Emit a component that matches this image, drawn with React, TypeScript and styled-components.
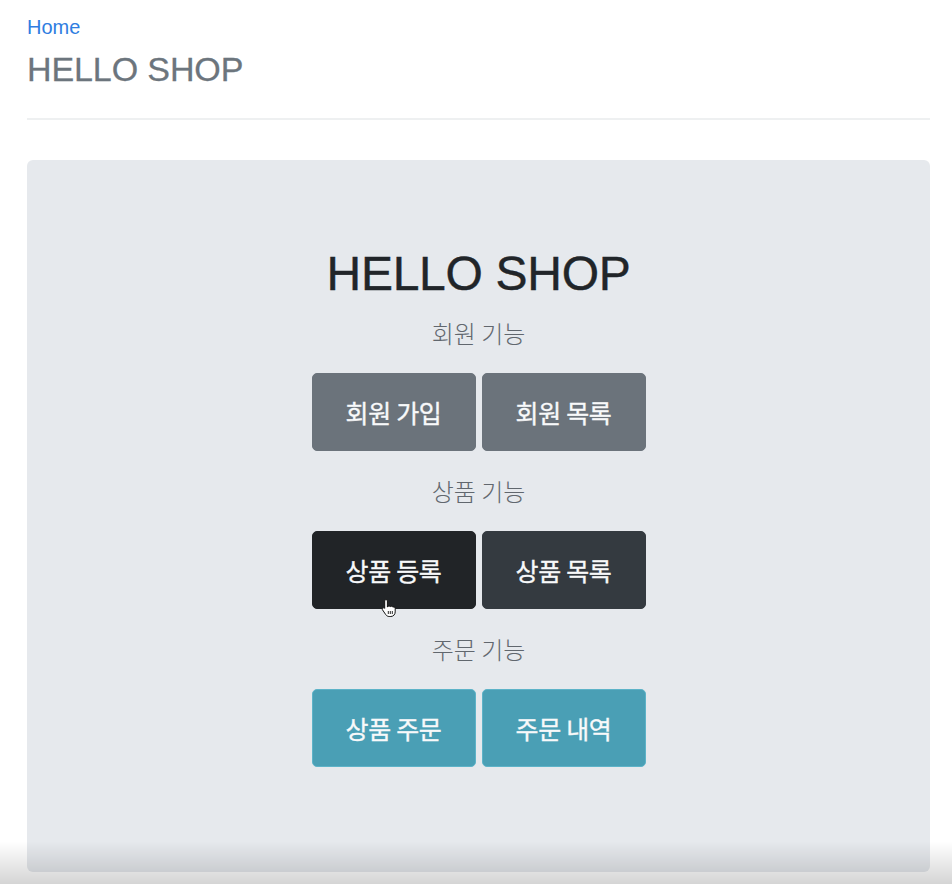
import React from "react";
import styled, { createGlobalStyle } from "styled-components";

const Global = createGlobalStyle`
  html, body { margin: 0; padding: 0; background: #ffffff; }
  body {
    font-family: "Liberation Sans", "Noto Sans CJK KR", Arial, sans-serif;
    color: #212529;
    -webkit-font-smoothing: antialiased;
  }
  * { box-sizing: border-box; }
`;

const Page = styled.div`
  padding: 0 22px 0 27px;
  min-height: 884px;
`;

const Header = styled.header`
  display: flex;
  flex-direction: column;
  padding-top: 15px;
  padding-bottom: 27px;
  border-bottom: 2px solid #eef0f1;
`;

const HomeLink = styled.a`
  font-size: 20px;
  line-height: 24px;
  color: #2f7de1;
  text-decoration: none;
  margin-bottom: 8px;
`;

const SiteTitle = styled.h3`
  margin: 0;
  font-size: 34px;
  line-height: 44px;
  font-weight: 400;
  color: #6c757d;
  letter-spacing: -0.1px;
  -webkit-text-stroke: 0.3px #6c757d;
`;

const Jumbotron = styled.section`
  margin-top: 40px;
  background: #e6e9ed;
  border-radius: 6px;
  height: 712px;
  padding-top: 85px;
  display: flex;
  flex-direction: column;
  align-items: center;
`;

const MainTitle = styled.h1`
  margin: 0 0 15px;
  font-size: 48px;
  line-height: 58px;
  font-weight: 400;
  color: #212529;
  letter-spacing: -0.3px;
  -webkit-text-stroke: 0.4px #212529;
`;

const Section = styled.div`
  display: flex;
  flex-direction: column;
  align-items: center;
  & + & { margin-top: 25px; }
`;

const Label = styled.p`
  margin: 0 0 25px;
  font-family: "Noto Sans CJK KR", sans-serif;
  font-size: 24px;
  line-height: 30px;
  font-weight: 300;
  color: #61676e;
`;

const ButtonRow = styled.div`
  display: flex;
  gap: 6px;
`;

const Button = styled.a<{ $bg: string; $border?: string }>`
  position: relative;
  width: 164px;
  height: 78px;
  display: flex;
  align-items: center;
  justify-content: center;
  background: ${(p) => p.$bg};
  border: 1px solid ${(p) => p.$border ?? p.$bg};
  border-radius: 5px;
  color: #f8f9fa;
  font-family: "Noto Sans CJK KR", sans-serif;
  font-size: 25px;
  font-weight: 400;
  -webkit-text-stroke: 0.35px #f8f9fa;
  text-decoration: none;
  letter-spacing: -0.3px;
`;

const Cursor = styled.svg`
  position: absolute;
  left: 68px;
  top: 66px;
  width: 16px;
  height: 20px;
`;

const BottomFade = styled.div`
  position: fixed;
  left: 0;
  right: 0;
  bottom: 0;
  height: 42px;
  pointer-events: none;
  background: linear-gradient(to bottom, rgba(0, 0, 0, 0), rgba(0, 0, 0, 0.17));
`;

type Btn = { text: string; bg: string; border?: string; cursor?: boolean };

const sections: { label: string; buttons: Btn[] }[] = [
  {
    label: "회원 기능",
    buttons: [
      { text: "회원 가입", bg: "#6b737b" },
      { text: "회원 목록", bg: "#6b737b" },
    ],
  },
  {
    label: "상품 기능",
    buttons: [
      { text: "상품 등록", bg: "#212427", cursor: true },
      { text: "상품 목록", bg: "#343a40" },
    ],
  },
  {
    label: "주문 기능",
    buttons: [
      { text: "상품 주문", bg: "#4a9fb5", border: "#5db3c8" },
      { text: "주문 내역", bg: "#4a9fb5", border: "#5db3c8" },
    ],
  },
];

export default function App() {
  return (
    <>
      <Global />
      <Page>
        <Header>
          <HomeLink href="#">Home</HomeLink>
          <SiteTitle>HELLO SHOP</SiteTitle>
        </Header>
        <Jumbotron>
          <MainTitle>HELLO SHOP</MainTitle>
          {sections.map((s) => (
            <Section key={s.label}>
              <Label>{s.label}</Label>
              <ButtonRow>
                {s.buttons.map((b) => (
                  <Button key={b.text} href="#" $bg={b.bg} $border={b.border}>
                    {b.text}
                    {b.cursor && (
                      <Cursor viewBox="0 0 16 20">
                        <path
                          d="M5 1.5c.8 0 1.4.6 1.4 1.4V9l.3-.1c.2-.6.7-1 1.3-1 .6 0 1.1.4 1.3.9.3-.4.7-.6 1.2-.6.7 0 1.2.4 1.4 1 .2-.2.6-.3.9-.3.8 0 1.4.6 1.4 1.4v3.6c0 2.6-1.9 4.6-4.4 4.6H8.2c-1.4 0-2.6-.7-3.4-1.8L1.6 12c-.5-.6-.4-1.4.2-1.9.5-.4 1.3-.4 1.8.1l.1.1V2.9c0-.8.5-1.4 1.3-1.4z"
                          fill="#ffffff"
                          stroke="#111"
                          strokeWidth="1"
                        />
                        <path d="M7.3 13v3M9.3 13v3M11.3 13v3" stroke="#111" strokeWidth="0.9" />
                      </Cursor>
                    )}
                  </Button>
                ))}
              </ButtonRow>
            </Section>
          ))}
        </Jumbotron>
      </Page>
      <BottomFade />
    </>
  );
}
